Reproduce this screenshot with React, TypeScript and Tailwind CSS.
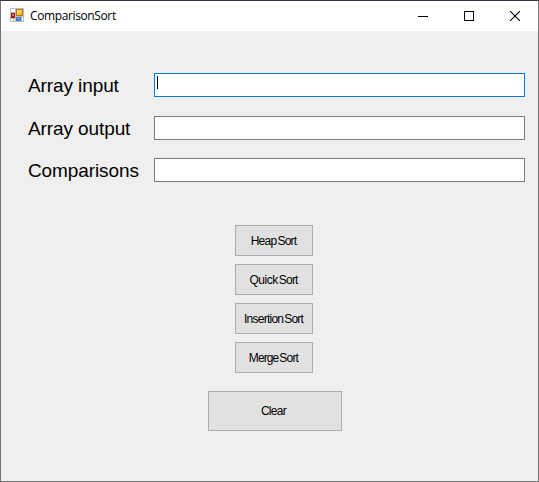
import type { ReactNode } from "react";

function AppIcon() {
  return (
    <svg width="14" height="14" viewBox="0 0 14 14" shapeRendering="crispEdges" className="mb-[2px] shrink-0">
      <defs>
        <linearGradient id="gold" x1="0" y1="0" x2="1" y2="1">
          <stop offset="0" stopColor="#ffe9a0" />
          <stop offset="1" stopColor="#eba600" />
        </linearGradient>
      </defs>
      <rect width="14" height="14" fill="#bdbdbd" />
      <rect x="1" y="1" width="4" height="3" fill="#fff" />
      <rect x="1" y="11" width="2" height="2" fill="#fff" />
      <rect x="4" y="11" width="1" height="2" fill="#fff" />
      <rect x="12" y="9" width="1" height="4" fill="#fff" />
      <rect x="1" y="5" width="4" height="5" fill="#a61c12" />
      <rect x="2" y="6" width="2" height="2" fill="#e0705e" />
      <rect x="6" y="1" width="7" height="7" fill="#b77b08" />
      <rect x="7" y="2" width="5" height="5" fill="url(#gold)" />
      <rect x="6" y="9" width="5" height="4" fill="#3b78d8" />
      <rect x="7" y="10" width="3" height="1" fill="#8ab8f8" />
    </svg>
  );
}

function Caption({ children }: { children: ReactNode }) {
  return <div className="flex h-[28px] w-[46px] items-center justify-center">{children}</div>;
}

function Field({ label, focused }: { label: string; focused?: boolean }) {
  return (
    <div className="flex h-6 items-center">
      <span className="w-[126px] shrink-0 whitespace-nowrap pt-[2px] text-[19px] leading-6 tracking-[-0.1px]">{label}</span>
      <div
        className={`flex h-6 w-[371px] border bg-white pl-[2px] pt-[2px] ${focused ? "border-[#0078d7]" : "border-[#7a7a7a]"}`}
      >
        {focused && <span className="h-[13px] w-px bg-black" />}
      </div>
    </div>
  );
}

function SortButton({ name, tracking }: { name: string; tracking: string }) {
  return (
    <button className="h-[31px] w-[78px] whitespace-nowrap border border-[#adadad] bg-[#e1e1e1] pr-px pt-px text-[12px] leading-4">
      <span className={tracking}>{name}</span>
      <span className="ml-[1px] tracking-[-0.8px]">Sort</span>
    </button>
  );
}

export default function App() {
  return (
    <div className="relative flex h-[482px] w-[539px] flex-col overflow-hidden border border-[#737373] border-t-[#353844] bg-[#efefef] font-['Liberation_Sans',Arial,sans-serif] text-black">
      <header className="flex h-[30px] shrink-0 items-center bg-white pl-[9px]">
        <AppIcon />
        <span className="ml-[6px] font-['Open_Sans','Noto_Sans',sans-serif] text-[12px] leading-4 tracking-[-0.38px]">ComparisonSort</span>
        <div className="ml-auto flex">
          <Caption>
            <svg width="10" height="10"><rect y="5" width="10" height="1" /></svg>
          </Caption>
          <Caption>
            <svg width="10" height="10"><rect x=".5" y=".5" width="9" height="9" fill="none" stroke="black" /></svg>
          </Caption>
          <Caption>
            <svg width="10" height="10"><path d="M0 0L10 10M10 0L0 10" fill="none" stroke="black" strokeWidth="1.15" /></svg>
          </Caption>
        </div>
      </header>
      <main className="flex flex-col pt-[42px]">
        <section className="flex flex-col pl-[27px]">
          <Field label="Array input" focused />
          <div className="mt-[19px]"><Field label="Array output" /></div>
          <div className="mt-[18px]"><Field label="Comparisons" /></div>
        </section>
        <section className="ml-[207px] mt-[43px] flex w-[134px] flex-col items-center gap-2">
          <div className="flex flex-col gap-2 pr-[2px]">
            <SortButton name="Heap" tracking="tracking-[-0.7px]" />
            <SortButton name="Quick" tracking="tracking-[-0.45px]" />
            <SortButton name="Insertion" tracking="tracking-[-0.75px]" />
            <SortButton name="Merge" tracking="tracking-[-0.9px]" />
          </div>
          <button className="mt-[10px] h-10 w-[134px] border border-[#adadad] bg-[#e1e1e1] pr-[3px] text-[12px] leading-4 tracking-[-0.7px]">Clear</button>
        </section>
      </main>
      {/* Backdrop showing through the translucent window border */}
      <span className="absolute -right-px top-[58px] h-px w-px bg-[#202028]" />
      <span className="absolute -right-px top-[60px] h-[26px] w-px bg-[#777b50]" />
      <span className="absolute -bottom-px left-[61px] h-px w-[7px] bg-[#353844]" />
    </div>
  );
}
